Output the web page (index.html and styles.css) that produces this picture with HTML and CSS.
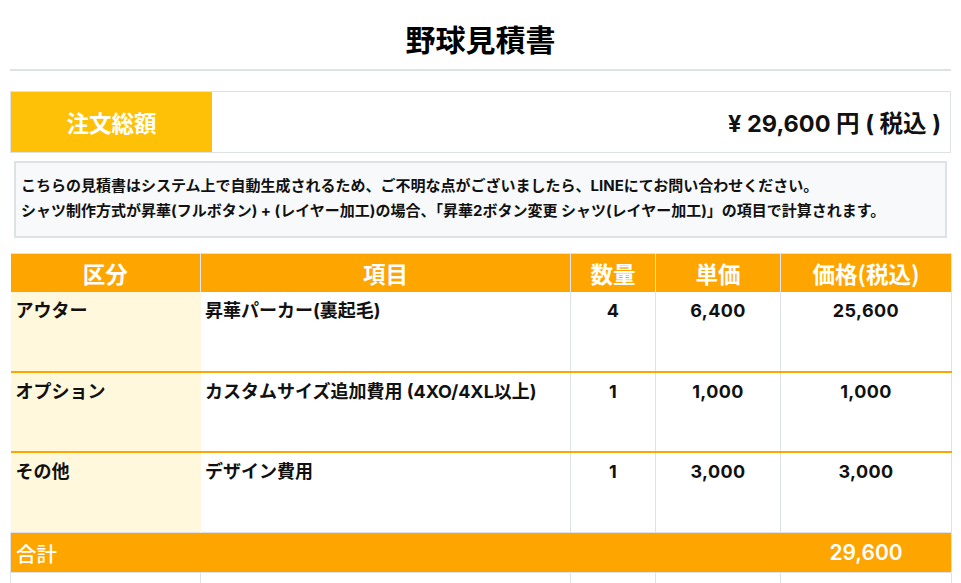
FILE: index.html
```html
<!DOCTYPE html>
<html lang="ja">
<head>
<meta charset="utf-8">
<title>野球見積書</title>
<link rel="stylesheet" href="styles.css">
</head>
<body>
<div class="page">
  <h1 class="title">野球見積書</h1>
  <hr class="rule">
  <div class="total-box">
    <div class="total-label">注文総額</div>
    <div class="total-value">¥ 29,600 円 ( 税込 )</div>
  </div>
  <div class="note">
    <p>こちらの見積書はシステム上で自動生成されるため、ご不明な点がございましたら、LINEにてお問い合わせください。</p>
    <p>シャツ制作方式が昇華(フルボタン) + (レイヤー加工)の場合、「昇華2ボタン変更 シャツ(レイヤー加工)」の項目で計算されます。</p>
  </div>
  <table class="quote">
    <colgroup>
      <col class="c1"><col class="c2"><col class="c3"><col class="c4"><col class="c5">
    </colgroup>
    <thead>
      <tr>
        <th>区分</th><th>項目</th><th>数量</th><th>単価</th><th>価格(税込)</th>
      </tr>
    </thead>
    <tbody>
      <tr class="item">
        <td class="cat">アウター</td><td>昇華パーカー(裏起毛)</td><td class="num">4</td><td class="num">6,400</td><td class="num">25,600</td>
      </tr>
      <tr class="item">
        <td class="cat">オプション</td><td>カスタムサイズ追加費用 (4XO/4XL以上)</td><td class="num">1</td><td class="num">1,000</td><td class="num">1,000</td>
      </tr>
      <tr class="item last">
        <td class="cat">その他</td><td>デザイン費用</td><td class="num">1</td><td class="num">3,000</td><td class="num">3,000</td>
      </tr>
      <tr class="sum">
        <td colspan="4" class="sum-label">合計</td><td class="num">29,600</td>
      </tr>
      <tr class="empty">
        <td></td><td></td><td></td><td></td><td></td>
      </tr>
    </tbody>
  </table>
</div>
</body>
</html>
```

FILE: styles.css
```css
* { box-sizing: border-box; }
html, body { margin: 0; padding: 0; background: #fff; }
body {
  font-family: Inter, "Noto Sans CJK JP", sans-serif;
  color: #111;
}
.page { padding: 0 10px; }

.title {
  margin: 17px 0 0;
  font-family: "Noto Sans CJK JP", sans-serif;
  font-size: 30px;
  line-height: 42px;
  font-weight: 700;
  text-align: center;
  color: #000;
}
.rule {
  margin: 10px 0 0;
  border: 0;
  height: 2px;
  background: #dee2e6;
}

.total-box {
  margin-top: 20px;
  display: flex;
  border: 1px solid #dee2e6;
  height: 62px;
}
.total-label {
  width: 201px;
  background: #ffc107;
  color: #fff;
  font-family: "Noto Sans CJK JP", sans-serif;
  font-size: 22.5px;
  font-weight: 700;
  display: flex;
  align-items: center;
  justify-content: center;
}
.total-value {
  flex: 1;
  display: flex;
  align-items: center;
  justify-content: flex-end;
  padding-right: 9px;
  font-size: 23.5px;
  font-weight: 700;
  color: #111;
}

.note {
  margin: 8px 4px 0;
  background: #f8f9fa;
  border: 2px solid #dee2e6;
  padding: 10px 5px 13px;
  font-size: 15px;
  font-weight: 700;
  line-height: 25px;
  color: #111;
}
.note p { margin: 0; white-space: nowrap; }

.quote {
  margin-top: 15px;
  width: 100%;
  border-collapse: collapse;
  table-layout: fixed;
  border-top: 1px solid #dee2e6;
}
.c1 { width: 190px; }
.c2 { width: 370px; }
.c3 { width: 85px; }
.c4 { width: 125px; }
.c5 { width: 171px; }

.quote th {
  background: #ffa500;
  color: #fff;
  font-family: "Noto Sans CJK JP", sans-serif;
  font-size: 22.5px;
  font-weight: 700;
  height: 38px;
  padding: 0;
  text-align: center;
  border-left: 1px solid #e4e8ee;
  border-right: 1px solid #e4e8ee;
}
.quote th:first-child { border-left: 0; }

.quote td {
  padding: 7px 4px;
  vertical-align: top;
  font-size: 18px;
  line-height: 24px;
  font-weight: 700;
  color: #111;
  border-left: 1px solid #dee2e6;
  border-right: 1px solid #dee2e6;
}
.quote td:first-child { border-left: 0; padding-left: 5px; }
.item td { height: 80px; border-bottom: 2px solid #ffa500; }
.item.last td { border-bottom: 0; height: 81px; }
.item td.cat { background: #fff8dc; border-right-color: #fff8dc; }
.num { text-align: center; }
.item td.num { letter-spacing: 0.4px; }

.sum td {
  background: #ffa500;
  color: #fff;
  height: 40px;
  padding: 0 6px;
  vertical-align: middle;
  font-weight: 500;
  border: 1px solid #dee2e6;
}
.sum td.sum-label {
  border-left: 1px solid #dee2e6;
  border-right-color: #ffa500;
  padding-left: 5px;
  font-family: "Noto Sans CJK JP", sans-serif;
  font-size: 20.5px;
}
.sum td.num { font-size: 21px; font-weight: 600; border-left-color: #ffa500; }

.empty td {
  height: 30px;
  border: 1px solid #dee2e6;
}
.empty td:first-child { border-left: 1px solid #dee2e6; }
```
